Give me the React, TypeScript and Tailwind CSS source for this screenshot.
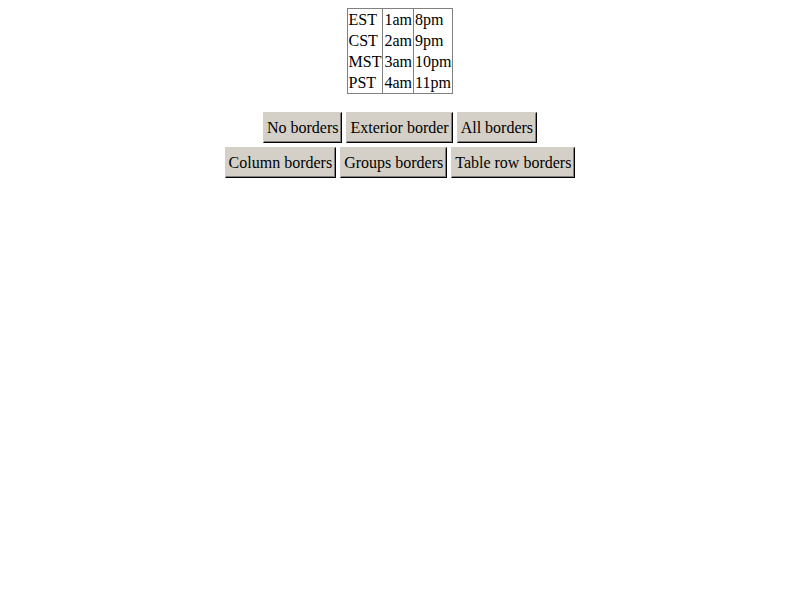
const rows = [
  ["EST", "1am", "8pm"],
  ["CST", "2am", "9pm"],
  ["MST", "3am", "10pm"],
  ["PST", "4am", "11pm"],
];

const buttonRows = [
  ["No borders", "Exterior border", "All borders"],
  ["Column borders", "Groups borders", "Table row borders"],
];

const App = () => {
  return (
    <div className="min-h-screen bg-white text-black font-['Liberation_Serif','Times_New_Roman',serif] text-[16px]">
      <div className="flex flex-col items-center pt-[8px]">
        {/* Time zone table */}
        <table className="border border-[#808080] border-collapse">
          <tbody>
            {rows.map((row) => (
              <tr key={row[0]}>
                {row.map((cell, i) => (
                  <td
                    key={i}
                    className="border-x border-[#808080] px-[1px] py-[1px] leading-[19px] text-left"
                  >
                    {cell}
                  </td>
                ))}
              </tr>
            ))}
          </tbody>
        </table>

        {/* Border toggles */}
        <div className="flex flex-col items-center gap-[4px] mt-[18px]">
          {buttonRows.map((group, r) => (
            <div key={r} className="flex gap-[4px]">
              {group.map((label) => (
                <button
                  key={label}
                  className="h-[31px] px-[3px] bg-[#d4d0c8] border border-t-[#d4d0c8] border-l-[#d4d0c8] border-r-black border-b-black shadow-[inset_-1px_-1px_0_#808080] leading-[18px]"
                >
                  {label}
                </button>
              ))}
            </div>
          ))}
        </div>
      </div>
    </div>
  );
};

export default App;
